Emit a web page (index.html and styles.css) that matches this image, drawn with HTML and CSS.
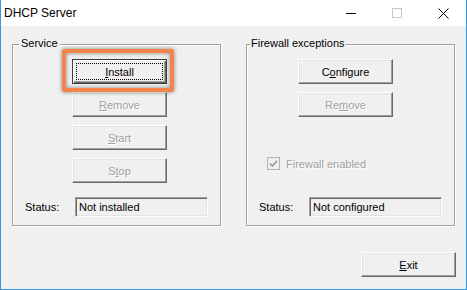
FILE: index.html
```html
<!DOCTYPE html>
<html lang="en">
<head>
  <meta charset="UTF-8" />
  <title>DHCP Server</title>
  <link rel="stylesheet" href="styles.css">
</head>
<body>

  <div class="window">
    <div class="titlebar">
      <span class="title">DHCP Server</span>
      <div class="caption">
        <span class="cap-btn">
          <svg width="10" height="10" viewBox="0 0 10 10"><path d="M0 5.5H10" stroke="#000" stroke-width="1"/></svg>
        </span>
        <span class="cap-btn">
          <svg width="10" height="10" viewBox="0 0 10 10"><rect x="0.5" y="0.5" width="9" height="9" fill="none" stroke="#c8c8c8"/></svg>
        </span>
        <span class="cap-btn">
          <svg width="11" height="11" viewBox="0 0 11 11"><path d="M0.5 0.5L10.5 10.5M10.5 0.5L0.5 10.5" stroke="#000" stroke-width="1"/></svg>
        </span>
      </div>
    </div>

    <div class="client">
      <div class="groups">

        <div class="group service">
          <span class="legend">Service</span>
          <div class="btn-col">
            <div class="hl-wrap">
              <button class="btn default"><u>I</u>nstall</button>
              <span class="highlight"></span>
            </div>
            <button class="btn" disabled><u>R</u>emove</button>
            <button class="btn" disabled><u>S</u>tart</button>
            <button class="btn" disabled>S<u>t</u>op</button>
          </div>
          <div class="status-row">
            <span class="status-label">Status:</span>
            <span class="field">Not installed</span>
          </div>
        </div>

        <div class="group firewall">
          <span class="legend">Firewall exceptions</span>
          <div class="btn-col">
            <button class="btn">C<u>o</u>nfigure</button>
            <button class="btn" disabled>Re<u>m</u>ove</button>
          </div>
          <div class="check-row">
            <span class="checkbox">
              <svg width="11" height="11" viewBox="0 0 11 11"><path d="M2 5.5L4.3 8L9 2.8" fill="none" stroke="#a0a0a0" stroke-width="1.8"/></svg>
            </span>
            <span class="check-label">Firewall enabled</span>
          </div>
          <div class="status-row">
            <span class="status-label">Status:</span>
            <span class="field">Not configured</span>
          </div>
        </div>

      </div>

      <div class="footer">
        <button class="btn"><u>E</u>xit</button>
      </div>
    </div>
  </div>

</body>
</html>
```

FILE: styles.css
```css
body {
  margin: 0;
  background: #fff;
  font-family: "Liberation Sans", Arial, sans-serif;
  font-size: 11px;
  color: #000;
}
.window {
  width: 467px;
  height: 290px;
  box-sizing: border-box;
  border: 1px solid #3a96dd;
  border-top: none;
  display: flex;
  flex-direction: column;
  background: #f0f0f0;
}
.titlebar {
  height: 26px;
  flex-shrink: 0;
  background: #fff;
  display: flex;
  align-items: center;
  justify-content: space-between;
}
.title {
  padding-left: 3px;
  font-size: 12px;
}
.caption {
  display: flex;
  height: 26px;
}
.cap-btn {
  width: 46px;
  display: flex;
  align-items: center;
  justify-content: center;
}
.client {
  flex: 1;
  padding: 18px 10px 0 11px;
  display: flex;
  flex-direction: column;
}
.groups {
  display: flex;
  gap: 25px;
}
.group {
  position: relative;
  width: 209px;
  box-sizing: border-box;
  border: 1px solid #a0a0a0;
  box-shadow: 1px 1px 0 #fff, inset 1px 1px 0 #fff;
  padding: 14px 0 8px 0;
  display: flex;
  flex-direction: column;
}
.legend {
  position: absolute;
  top: -8px;
  left: 6px;
  padding: 0 2px;
  line-height: 13px;
  background: #f0f0f0;
}
.firewall .legend {
  left: 3px;
  padding: 0 1px;
}
.btn-col {
  display: flex;
  flex-direction: column;
  gap: 8px;
}
.service .btn-col {
  margin: 0 0 14px 59px;
}
.firewall .btn-col {
  margin-left: 51px;
}
.btn {
  width: 95px;
  height: 25px;
  box-sizing: border-box;
  padding: 0;
  margin: 0;
  font: inherit;
  color: #000;
  background: #f0f0f0;
  border: 1px solid;
  border-color: #fff #696969 #696969 #fff;
  box-shadow: inset -1px -1px 0 #a0a0a0, inset 1px 1px 0 #e3e3e3;
  border-radius: 0;
}
.btn:disabled {
  color: #a0a0a0;
  text-shadow: 1px 1px 0 #fff;
}
.btn.default {
  border-color: #3c3c3c;
  box-shadow: inset 1px 1px 0 #fff, inset -1px -1px 0 #696969, inset -2px -2px 0 #a0a0a0;
  outline: 1px dotted #000;
  outline-offset: -5px;
}
.hl-wrap {
  position: relative;
  height: 25px;
}
.highlight {
  position: absolute;
  left: -10px;
  top: -10px;
  width: 112px;
  height: 43px;
  box-sizing: border-box;
  border: 4px solid #f5844a;
  border-radius: 2px;
  box-shadow: 0 0 4px rgba(0,0,0,0.45), inset 0 0 4px rgba(0,0,0,0.45);
  pointer-events: none;
}
.check-row {
  display: flex;
  align-items: center;
  gap: 6px;
  margin: 40px 0 0 20px;
  color: #a0a0a0;
  text-shadow: 1px 1px 0 #fff;
}
.checkbox {
  width: 13px;
  height: 13px;
  box-sizing: border-box;
  border: 1px solid #b4b4b4;
  background: #f0f0f0;
  display: flex;
  align-items: center;
  justify-content: center;
}
.status-row {
  margin: auto 0 0 12px;
  display: flex;
  align-items: center;
}
.status-label {
  width: 50px;
}
.field {
  width: 133px;
  height: 20px;
  box-sizing: border-box;
  border: 1px solid;
  border-color: #a0a0a0 #fff #fff #a0a0a0;
  box-shadow: inset 1px 1px 0 #696969, inset -1px -1px 0 #e3e3e3;
  padding-left: 3px;
  display: flex;
  align-items: center;
}
.footer {
  display: flex;
  justify-content: flex-end;
  margin-top: 26px;
}
```
